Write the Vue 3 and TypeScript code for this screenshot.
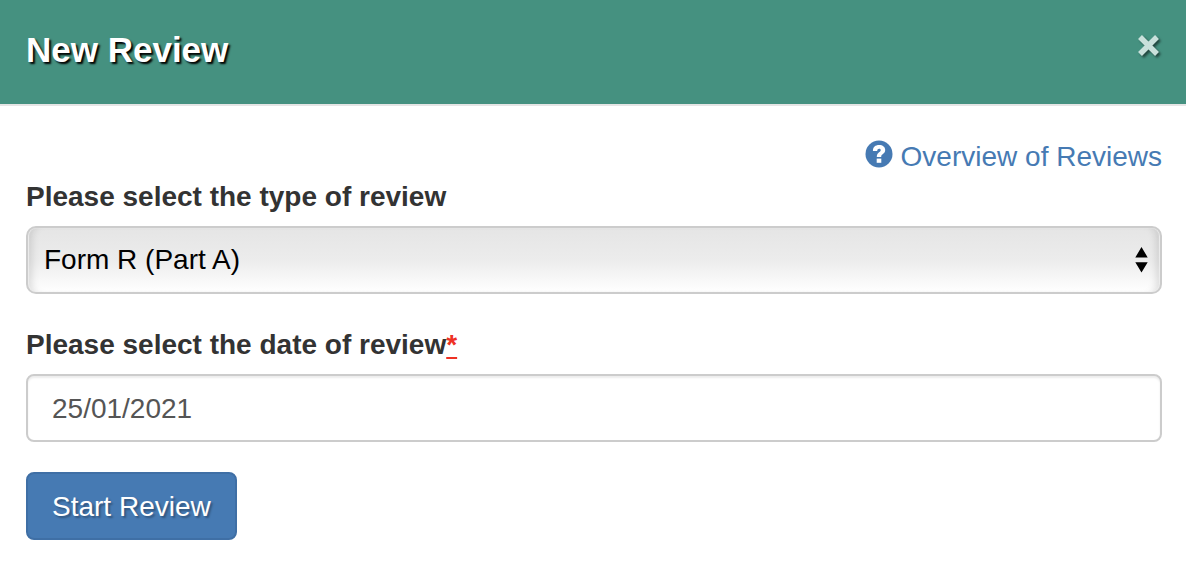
<script setup lang="ts">
import { ref } from 'vue'

const reviewTypes: string[] = ['Form R (Part A)', 'Form R (Part B)']
const reviewType = ref<string>(reviewTypes[0])
const reviewDate = ref<string>('25/01/2021')
</script>

<template>
  <section class="dialog" role="dialog" aria-labelledby="dialog-title">
    <header class="header">
      <h1 id="dialog-title" class="title">New Review</h1>
      <button class="close" type="button" aria-label="Close">
        <svg viewBox="0 0 26 26" aria-hidden="true">
          <path d="M4 4L21 21M21 4L4 21" />
        </svg>
      </button>
    </header>

    <form class="body" @submit.prevent>
      <div class="help">
        <a class="help-link" href="#">
          <svg class="help-icon" viewBox="0 0 28 28" aria-hidden="true">
            <circle cx="14" cy="14" r="13.5" fill="#467ab3" />
            <path
              d="M7.9 10.9C8 7.2 10.3 5.1 14.1 5.1C17.8 5.1 20.2 7.1 20.2 10.1C20.2 12.1 19.3 13.2 17.7 14.3C16.6 15.1 16.2 15.6 16.2 16.9H11.8C11.8 14.6 12.4 13.4 14.1 12.2C15.3 11.4 15.7 11 15.7 10.2C15.7 9.3 15.1 8.8 14.1 8.8C12.9 8.8 12.3 9.5 12.2 10.9Z"
              fill="#fff"
            />
            <rect x="11.7" y="18.6" width="4.6" height="4.2" fill="#fff" />
          </svg>
          <span>Overview of Reviews</span>
        </a>
      </div>

      <div class="group">
        <label class="label" for="review-type">Please select the type of review</label>
        <div class="select-wrap">
          <select id="review-type" v-model="reviewType" class="control select">
            <option v-for="type in reviewTypes" :key="type" :value="type">{{ type }}</option>
          </select>
          <svg class="arrows" viewBox="0 0 14 26" aria-hidden="true">
            <path d="M6.500 0L12.700 10.500H0.300ZM0.300 15.300H12.700L6.500 25.500Z" />
          </svg>
        </div>
      </div>

      <div class="group">
        <label class="label" for="review-date">Please select the date of review<abbr class="required" title="required">*</abbr></label>
        <input id="review-date" v-model="reviewDate" class="control input" type="text" required />
      </div>

      <button class="submit" type="submit">Start Review</button>
    </form>
  </section>
</template>

<style>
body {
  background: #fff;
}
</style>

<style scoped>
.dialog,
.dialog * {
  box-sizing: border-box;
}

.dialog {
  font-family: "Helvetica Neue", Helvetica, "Liberation Sans", Arial, sans-serif;
  font-size: 28px;
  line-height: 40px;
  color: #333;
}

.header {
  display: flex;
  align-items: flex-start;
  justify-content: space-between;
  padding: 24px 24px 28px 26px;
  background: #459180;
  border-bottom: 2px solid #e5e5e5;
}

.title {
  margin: 0;
  font-size: 35px;
  font-weight: 700;
  line-height: 52px;
  color: #fff;
  text-shadow: 2px 2px 2px #000;
}

.close {
  display: flex;
  margin: 9px 0 0;
  padding: 0;
  border: 0;
  background: none;
  cursor: pointer;
}

.close svg {
  width: 26px;
  height: 26px;
  overflow: visible;
  fill: none;
  stroke: #c9e0db;
  stroke-width: 5.5;
  filter: drop-shadow(2px 2px 1px rgba(0, 0, 0, 0.5));
}

.body {
  padding: 31px 24px 24px 26px;
}

.help {
  display: flex;
  justify-content: flex-end;
}

.help-link {
  display: flex;
  gap: 8px;
  color: #467ab3;
  text-decoration: none;
}

.help-icon {
  width: 28px;
  height: 28px;
  margin-top: 3px;
}

.group {
  margin-bottom: 31px;
}

.group:last-of-type {
  margin-bottom: 30px;
}

.label {
  display: block;
  margin-bottom: 9px;
  font-weight: 700;
}

.required {
  color: #ee3124;
  font-weight: 700;
  text-decoration: underline;
  text-decoration-thickness: 2px;
  text-underline-offset: 3px;
}

.control {
  display: block;
  width: 100%;
  height: 68px;
  margin: 0;
  border: 2px solid #ccc;
  border-radius: 8px;
  font: inherit;
}

.select-wrap {
  position: relative;
}

.select {
  appearance: none;
  padding: 0 48px 0 16px;
  border-radius: 10px;
  color: #000;
  background: linear-gradient(#e5e5e5, #ececec 50%, #fff);
  box-shadow:
    inset 1px 0 1px #eee,
    inset -1px 0 1px #eee,
    inset 9px 0 8px -6px rgba(0, 0, 0, 0.14),
    inset -9px 0 8px -6px rgba(0, 0, 0, 0.14);
}

.arrows {
  position: absolute;
  top: 21px;
  right: 13px;
  width: 14px;
  height: 26px;
  pointer-events: none;
}

.input {
  padding: 2px 24px 0;
  color: #555;
  background: #fff;
  box-shadow: inset 0 2px 2px rgba(0, 0, 0, 0.075);
}

.submit {
  display: block;
  height: 68px;
  padding: 2px 24px 0;
  border: 2px solid #3f6fa5;
  border-radius: 8px;
  font: inherit;
  color: #fff;
  background: #467ab3;
  text-shadow: 2px 2px 2px rgba(0, 0, 0, 0.3);
  cursor: pointer;
}
</style>
